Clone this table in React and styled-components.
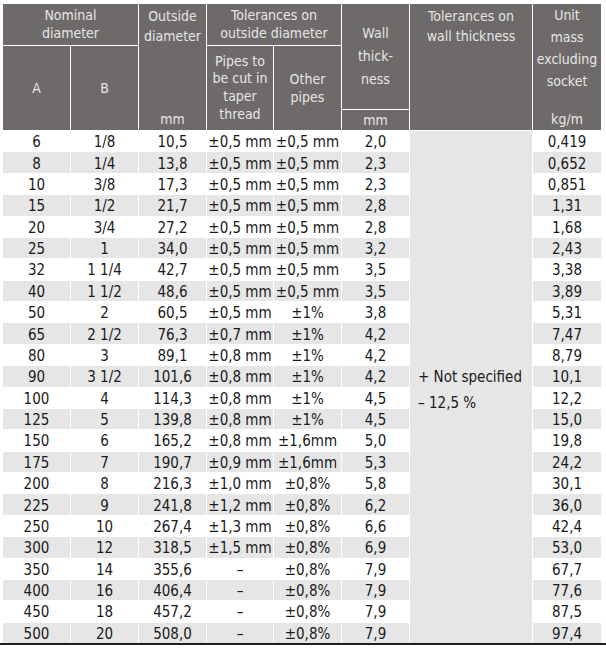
import styled, { createGlobalStyle } from "styled-components";

const GlobalStyle = createGlobalStyle`
  html, body {
    margin: 0;
    padding: 0;
    background: #ffffff;
  }
  body {
    font-family: "DejaVu Sans Condensed", "DejaVu Sans", "Liberation Sans", sans-serif;
  }
`;

const rows = [
  ["6", "1/8", "10,5", "±0,5 mm", "±0,5 mm", "2,0", "0,419"],
  ["8", "1/4", "13,8", "±0,5 mm", "±0,5 mm", "2,3", "0,652"],
  ["10", "3/8", "17,3", "±0,5 mm", "±0,5 mm", "2,3", "0,851"],
  ["15", "1/2", "21,7", "±0,5 mm", "±0,5 mm", "2,8", "1,31"],
  ["20", "3/4", "27,2", "±0,5 mm", "±0,5 mm", "2,8", "1,68"],
  ["25", "1", "34,0", "±0,5 mm", "±0,5 mm", "3,2", "2,43"],
  ["32", "1 1/4", "42,7", "±0,5 mm", "±0,5 mm", "3,5", "3,38"],
  ["40", "1 1/2", "48,6", "±0,5 mm", "±0,5 mm", "3,5", "3,89"],
  ["50", "2", "60,5", "±0,5 mm", "±1%", "3,8", "5,31"],
  ["65", "2 1/2", "76,3", "±0,7 mm", "±1%", "4,2", "7,47"],
  ["80", "3", "89,1", "±0,8 mm", "±1%", "4,2", "8,79"],
  ["90", "3 1/2", "101,6", "±0,8 mm", "±1%", "4,2", "10,1"],
  ["100", "4", "114,3", "±0,8 mm", "±1%", "4,5", "12,2"],
  ["125", "5", "139,8", "±0,8 mm", "±1%", "4,5", "15,0"],
  ["150", "6", "165,2", "±0,8 mm", "±1,6mm", "5,0", "19,8"],
  ["175", "7", "190,7", "±0,9 mm", "±1,6mm", "5,3", "24,2"],
  ["200", "8", "216,3", "±1,0 mm", "±0,8%", "5,8", "30,1"],
  ["225", "9", "241,8", "±1,2 mm", "±0,8%", "6,2", "36,0"],
  ["250", "10", "267,4", "±1,3 mm", "±0,8%", "6,6", "42,4"],
  ["300", "12", "318,5", "±1,5 mm", "±0,8%", "6,9", "53,0"],
  ["350", "14", "355,6", "–", "±0,8%", "7,9", "67,7"],
  ["400", "16", "406,4", "–", "±0,8%", "7,9", "77,6"],
  ["450", "18", "457,2", "–", "±0,8%", "7,9", "87,5"],
  ["500", "20", "508,0", "–", "±0,8%", "7,9", "97,4"],
];

export default function App() {
  return (
    <>
      <GlobalStyle />
      <Page>
        <Grid>
          <HeadCell $col="1 / span 2" $row="1" $lh={18}>
            <Lines>Nominal<br />diameter</Lines>
          </HeadCell>
          <HeadCell $col="3" $row="1 / span 3" $lh={20} $split>
            <Lines>Outside<br />diameter</Lines>
            <Unit>mm</Unit>
          </HeadCell>
          <HeadCell $col="4 / span 2" $row="1" $lh={18}>
            <Lines>Tolerances on<br />outside diameter</Lines>
          </HeadCell>
          <HeadCell $col="6" $row="1 / span 2" $lh={23} $center>
            <Lines>Wall<br />thick-<br />ness</Lines>
          </HeadCell>
          <HeadCell $col="7" $row="1 / span 3" $lh={20}>
            <Lines>Tolerances on<br />wall thickness</Lines>
          </HeadCell>
          <HeadCell $col="8" $row="1 / span 3" $lh={22} $split $lift>
            <Lines>Unit<br />mass<br />excluding<br />socket</Lines>
            <Unit>kg/m</Unit>
          </HeadCell>

          <HeadCell $col="1" $row="2 / span 2" $center>A</HeadCell>
          <HeadCell $col="2" $row="2 / span 2" $center>B</HeadCell>
          <HeadCell $col="4" $row="2 / span 2" $lh={17.7} $center>
            <Lines>Pipes to<br />be cut in<br />taper<br />thread</Lines>
          </HeadCell>
          <HeadCell $col="5" $row="2 / span 2" $lh={18} $center>
            <Lines>Other<br />pipes</Lines>
          </HeadCell>
          <HeadCell $col="6" $row="3" $center>mm</HeadCell>

          <WallNote>
            <span>+ Not specified</span>
            <span>– 12,5 %</span>
          </WallNote>

          {rows.map((row, i) =>
            row.map((value, j) => (
              <Cell key={`${i}-${j}`} $col={j < 6 ? j + 1 : 8} $row={i + 4} $shade={i % 2 === 1}>
                {value}
              </Cell>
            ))
          )}
        </Grid>
      </Page>
    </>
  );
}

const Page = styled.div`
  width: 606px;
  padding: 4px 5px 0 3px;
  box-sizing: border-box;
  border-bottom: 2px solid #1e1e1e;
`;

const Grid = styled.div`
  display: grid;
  grid-template-columns: 67px 67px 67px 66px 67px 67px 122px 68px;
  grid-template-rows: 41px 63px 20px repeat(24, 20.375px);
  gap: 1px;
  background: #ffffff;
  width: 598px;
`;

const HeadCell = styled.div`
  grid-column: ${(p) => p.$col};
  grid-row: ${(p) => p.$row};
  background: #6e6a69;
  color: #e6e6e6;
  font-size: 14px;
  line-height: ${(p) => (p.$lh ? `${p.$lh}px` : "18px")};
  text-align: center;
  display: flex;
  flex-direction: column;
  align-items: center;
  justify-content: ${(p) => (p.$center ? "center" : p.$split ? "space-between" : "flex-start")};
  padding: ${(p) => (p.$center ? "0" : p.$lift ? "0 0 2px" : "2px 0 2px")};
  box-sizing: border-box;
  white-space: nowrap;
`;

const Lines = styled.div`
  text-align: center;
`;

const Unit = styled.div`
  line-height: 18px;
`;

const Cell = styled.div`
  grid-column: ${(p) => p.$col};
  grid-row: ${(p) => p.$row};
  background: ${(p) => (p.$shade ? "#e6e6e6" : "#ffffff")};
  color: #1a1a1a;
  font-size: 15px;
  display: flex;
  align-items: center;
  justify-content: center;
  padding-top: 2px;
  box-sizing: border-box;
  white-space: nowrap;
`;

const WallNote = styled.div`
  grid-column: 7;
  grid-row: 4 / span 24;
  background: #e6e6e6;
  color: #1a1a1a;
  font-size: 15px;
  line-height: 26px;
  display: flex;
  flex-direction: column;
  justify-content: center;
  padding: 5px 0 0 8px;
  box-sizing: border-box;
`;
